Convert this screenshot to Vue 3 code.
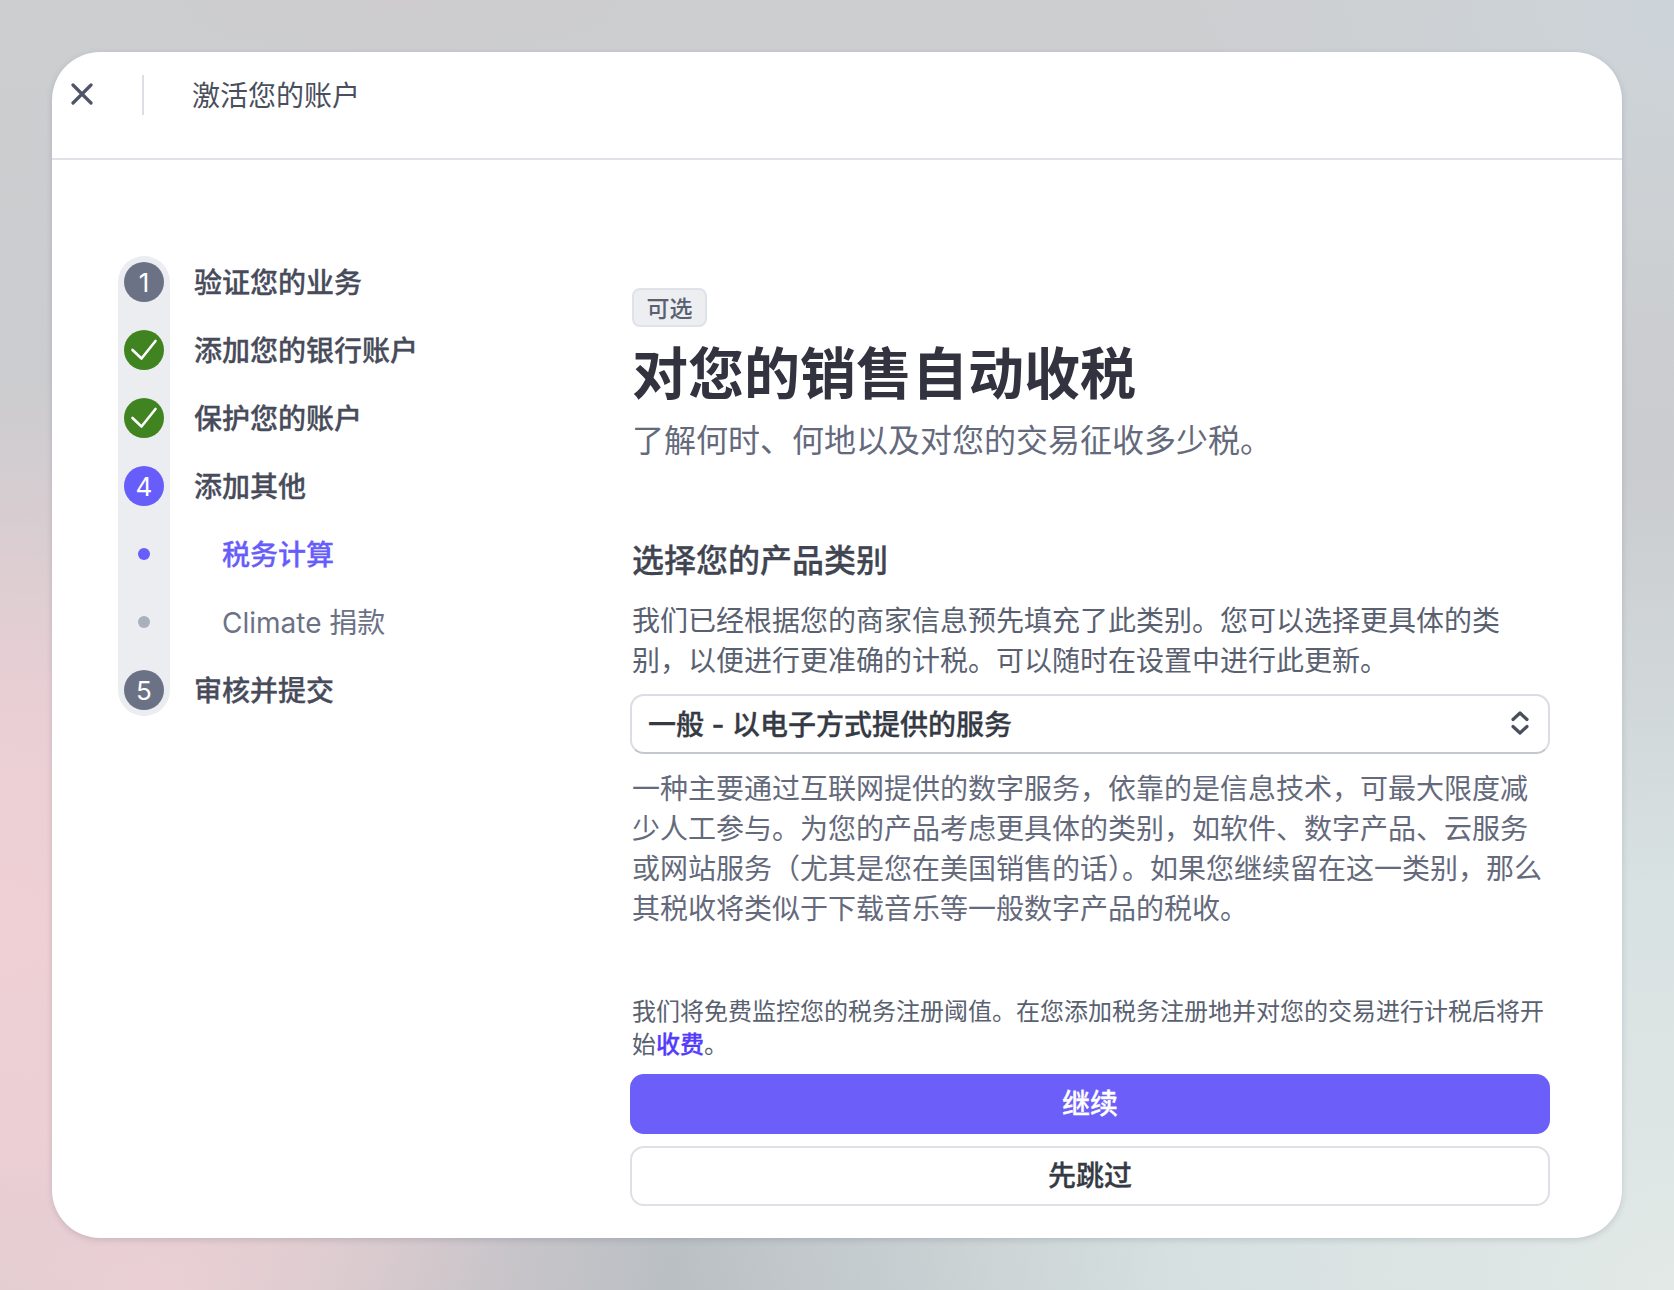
<template>
  <div class="page">
    <div class="card">
      <header class="topbar">
        <button class="close" aria-label="关闭">
          <svg width="22" height="22" viewBox="0 0 22 22" fill="none">
            <path d="M2 2 L20 20 M20 2 L2 20" stroke="#4f5566" stroke-width="3.2" stroke-linecap="round" />
          </svg>
        </button>
        <span class="topbar-divider"></span>
        <span class="topbar-title">激活您的账户</span>
      </header>

      <div class="content">
        <ol class="steps">
          <li
            v-for="step in steps"
            :key="step.label"
            class="step"
            :class="{ 'step-sub': step.sub }"
          >
            <span class="marker">
              <span v-if="step.sub" class="dot" :class="{ 'dot-on': step.active }"></span>
              <span v-else class="circle" :class="step.state">
                <svg v-if="step.state === 'done'" width="40" height="40" viewBox="0 0 40 40" fill="none">
                  <path d="M8.5 20 L17.5 28.5 L31.5 11" stroke="#fff" stroke-width="2.6" stroke-linecap="round" stroke-linejoin="round" />
                </svg>
                <template v-else>{{ step.num }}</template>
              </span>
            </span>
            <span class="step-label" :class="{ 'label-on': step.active }">{{ step.label }}</span>
          </li>
        </ol>

        <main class="main">
          <span class="badge">可选</span>
          <h1 class="title">对您的销售自动收税</h1>
          <p class="subtitle">了解何时、何地以及对您的交易征收多少税。</p>

          <h2 class="section-title">选择您的产品类别</h2>
          <p class="para">我们已经根据您的商家信息预先填充了此类别。您可以选择更具体的类别，以便进行更准确的计税。可以随时在设置中进行此更新。</p>

          <div class="select">
            <span>一般 - 以电子方式提供的服务</span>
            <svg width="18" height="24" viewBox="0 0 18 24" fill="none">
              <path d="M2 8.5 L9 2 L16 8.5 M2 15.5 L9 22 L16 15.5" stroke="#4a4f5e" stroke-width="3.2" stroke-linecap="round" stroke-linejoin="round" />
            </svg>
          </div>

          <p class="para desc">一种主要通过互联网提供的数字服务，依靠的是信息技术，可最大限度减少人工参与。为您的产品考虑更具体的类别，如软件、数字产品、云服务或网站服务（尤其是您在美国销售的话）。如果您继续留在这一类别，那么其税收将类似于下载音乐等一般数字产品的税收。</p>

          <p class="note">我们将免费监控您的税务注册阈值。在您添加税务注册地并对您的交易进行计税后将开始<a class="note-link">收费</a>。</p>

          <button class="btn btn-primary">继续</button>
          <button class="btn btn-secondary">先跳过</button>
        </main>
      </div>
    </div>
  </div>
</template>

<script setup>
const steps = [
  { num: 1, label: '验证您的业务', state: 'idle' },
  { num: 2, label: '添加您的银行账户', state: 'done' },
  { num: 3, label: '保护您的账户', state: 'done' },
  { num: 4, label: '添加其他', state: 'current' },
  { label: '税务计算', sub: true, active: true },
  { label: 'Climate 捐款', sub: true },
  { num: 5, label: '审核并提交', state: 'idle' }
]
</script>

<style>
html,
body {
  margin: 0;
}
</style>

<style scoped>
.page {
  box-sizing: border-box;
  width: 1674px;
  height: 1290px;
  padding: 52px;
  font-family: Inter, "Noto Sans CJK SC", sans-serif;
  background:
    radial-gradient(ellipse 620px 560px at 0px 930px, #efd0d5 0%, rgba(239, 208, 213, 0.85) 40%, rgba(239, 208, 213, 0) 100%),
    radial-gradient(ellipse 520px 300px at 150px 1290px, #e6d0d3 0%, rgba(230, 208, 211, 0) 100%),
    radial-gradient(ellipse 1000px 820px at 1674px 1290px, #e2e9e7 0%, rgba(221, 232, 231, 0.8) 50%, rgba(221, 232, 231, 0) 100%),
    radial-gradient(ellipse 500px 400px at 1674px 0px, #cdd4d9 0%, rgba(205, 212, 217, 0) 100%),
    radial-gradient(ellipse 250px 60px at 400px 0px, #cdcbce 0%, rgba(205, 203, 206, 0) 100%),
    linear-gradient(180deg, #cdced0 0%, #c9cbce 50%, #babfc4 100%);
}

.card {
  box-sizing: border-box;
  width: 1570px;
  height: 1186px;
  background: #fff;
  border-radius: 48px;
  box-shadow: 0 2px 6px rgba(60, 66, 87, 0.18);
  overflow: hidden;
}

.topbar {
  box-sizing: border-box;
  height: 108px;
  padding: 23px 0 0 19px;
  display: flex;
  align-items: flex-start;
  border-bottom: 2px solid #dfe2e7;
}

.close {
  width: 22px;
  height: 22px;
  margin-top: 8px;
  padding: 0;
  border: 0;
  background: none;
}

.topbar-divider {
  width: 2px;
  height: 40px;
  margin-left: 49px;
  background: #dcdfe6;
}

.topbar-title {
  margin-left: 48px;
  margin-top: 1px;
  font-size: 28px;
  line-height: 40px;
  color: #4a4f5e;
}

.content {
  display: flex;
  padding-left: 66px;
}

.steps {
  position: relative;
  flex: none;
  width: 514px;
  height: 460px;
  margin: 96px 0 0;
  padding: 6px 0;
  box-sizing: border-box;
  list-style: none;
  display: flex;
  flex-direction: column;
  gap: 28px;
}

.steps::before {
  content: "";
  position: absolute;
  left: 0;
  top: 0;
  bottom: 0;
  width: 52px;
  border-radius: 26px;
  background: #ecedf1;
}

.step {
  position: relative;
  display: flex;
  align-items: center;
  height: 40px;
  font-size: 28px;
  font-weight: 500;
  -webkit-text-stroke: 0.3px currentColor;
  color: #474b5a;
}

.marker {
  flex: none;
  width: 52px;
  display: flex;
  justify-content: center;
}

.circle {
  width: 40px;
  height: 40px;
  border-radius: 50%;
  display: flex;
  align-items: center;
  justify-content: center;
  font-size: 26px;
  font-weight: 400;
  -webkit-text-stroke: 0;
  color: #fff;
  background: #6c7286;
}

.circle.done {
  background: #408421;
}

.circle.current {
  background: #675dfa;
}

.dot {
  width: 12px;
  height: 12px;
  border-radius: 50%;
  background: #a9afbd;
}

.dot-on {
  background: #675dfa;
}

.step-label {
  margin-left: 24px;
  padding-top: 2px;
  line-height: 40px;
}

.step-sub {
  font-weight: 400;
  -webkit-text-stroke: 0;
  color: #6c7286;
}

.step-sub .step-label {
  margin-left: 52px;
}

.step-sub .label-on {
  font-weight: 500;
  -webkit-text-stroke: 0.3px currentColor;
  color: #675dfa;
}

.main {
  flex: none;
  width: 920px;
  margin-left: -2px;
  padding-top: 128px;
  display: flex;
  flex-direction: column;
  align-items: flex-start;
}

.badge {
  box-sizing: border-box;
  width: 75px;
  height: 39px;
  margin-left: 2px;
  border: 2px solid #dfe2e8;
  border-radius: 8px;
  background: #eceef2;
  font-size: 23px;
  font-weight: 500;
  line-height: 38px;
  text-align: center;
  color: #596171;
}

.title {
  margin: 9px 0 0 2px;
  font-size: 56px;
  font-weight: 700;
  line-height: 76px;
  color: #32333f;
}

.subtitle {
  margin: 7px 0 0 2px;
  font-size: 32px;
  line-height: 44px;
  color: #646a7c;
}

.section-title {
  margin: 76px 0 0 2px;
  font-size: 32px;
  font-weight: 500;
  -webkit-text-stroke: 0.3px currentColor;
  line-height: 44px;
  color: #414552;
}

.para {
  width: 918px;
  margin: 18px 0 0 2px;
  font-size: 28px;
  line-height: 40px;
  color: #596171;
}

.select {
  box-sizing: border-box;
  width: 920px;
  height: 60px;
  margin-top: 13px;
  padding: 0 19px 2px 16px;
  display: flex;
  align-items: center;
  justify-content: space-between;
  border: 2px solid #dadde3;
  border-bottom-color: #c3c7cf;
  border-radius: 14px;
  font-size: 28px;
  font-weight: 500;
  -webkit-text-stroke: 0.3px currentColor;
  color: #353a44;
}

.desc {
  margin-top: 15px;
  color: #646a7c;
}

.note {
  width: 918px;
  margin: 66px 0 0 2px;
  font-size: 24px;
  line-height: 33px;
  color: #596171;
}

.note-link {
  font-weight: 500;
  -webkit-text-stroke: 0.3px currentColor;
  color: #533afd;
}

.btn {
  box-sizing: border-box;
  width: 920px;
  height: 60px;
  padding: 0 0 4px;
  font-family: inherit;
  font-size: 28px;
  font-weight: 500;
  -webkit-text-stroke: 0.3px currentColor;
  border-radius: 14px;
}

.btn-primary {
  margin-top: 13px;
  border: 0;
  background: #6b5ef9;
  color: #fff;
}

.btn-secondary {
  margin-top: 12px;
  border: 2px solid #dde0e5;
  background: #fff;
  color: #353a44;
}
</style>
